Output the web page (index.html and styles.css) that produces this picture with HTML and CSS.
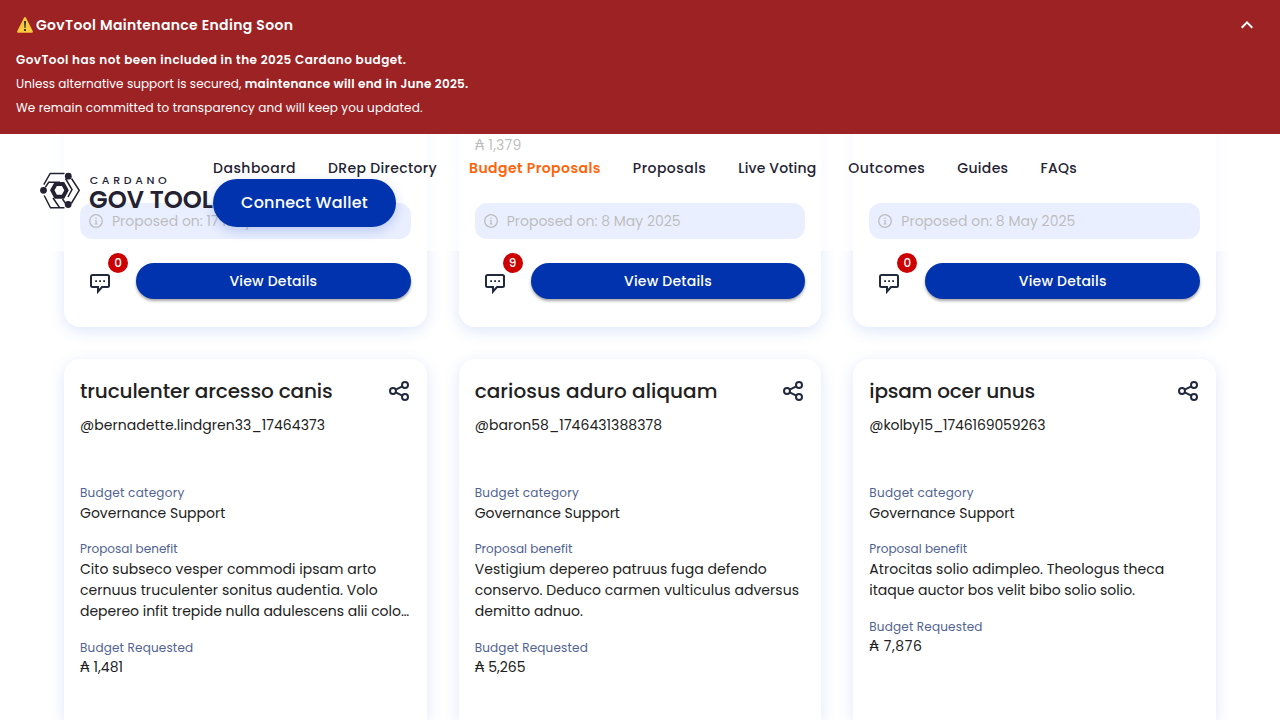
FILE: index.html
```html
<!DOCTYPE html>
<html lang="en">
<head>
<meta charset="utf-8">
<title>GovTool Budget Proposals</title>
<link rel="stylesheet" href="styles.css">
</head>
<body>
<svg class="defs" aria-hidden="true">
  <symbol id="share" viewBox="0 0 24 24"><g fill="none" stroke="#212a3d" stroke-width="2"><circle cx="6" cy="12" r="3"/><circle cx="18" cy="6" r="3"/><circle cx="18" cy="18" r="3"/><path d="M8.700 10.700 15.300 7.300M8.700 13.300 15.300 16.700"/></g></symbol>
  <symbol id="chat" viewBox="0 0 24 24"><path d="M4.500 4h15a1.500 1.500 0 0 1 1.500 1.500v9a1.500 1.500 0 0 1-1.500 1.500H14l-4 4.500V16H4.500A1.500 1.500 0 0 1 3 14.500v-9A1.500 1.500 0 0 1 4.500 4Z" fill="none" stroke="#212a3d" stroke-width="2"/><path d="M7.200 9.200h1.800v1.800H7.200zM11.200 9.200H13v1.800h-1.800zM15.200 9.200H17v1.800h-1.800z" fill="#212a3d"/></symbol>
  <symbol id="info" viewBox="0 0 16 16"><circle cx="8" cy="8" r="6.300" fill="none" stroke="#212121" stroke-width="1.300"/><path d="M7.300 4.800h1.400v1.300H7.300zM6.800 7.200h1.900v3.300h.7v.9H6.700v-.9h.8V8.100h-.7z" fill="#212121"/></symbol>
</svg>

<div class="banner">
  <div class="banner-head">
    <div class="banner-title"><svg class="warn" viewBox="0 0 18 18"><path d="M9 1c.5 0 .8.200 1 .7l6.700 13.200c.5 1.100 0 1.900-1.100 1.900H2.400c-1.100 0-1.600-.8-1.100-1.900L8 1.700c.2-.5.500-.7 1-.7Z" fill="#fcc93a"/><path d="M7.900 5h2.200l-.5 7H8.400zM8 13h2v2H8z" fill="#34404a"/></svg><span>GovTool Maintenance Ending Soon</span></div>
    <svg class="chevron" viewBox="0 0 24 24"><path d="m6.700 14.700 5.300-5.300 5.300 5.300" fill="none" stroke="#fff" stroke-width="2"/></svg>
  </div>
  <p><b class="b1">GovTool has not been included in the 2025 Cardano budget.</b></p>
  <p class="p2">Unless alternative support is secured, <b class="b2">maintenance will end in June 2025.</b></p>
  <p class="p3">We remain committed to transparency and will keep you updated.</p>
</div>

<header class="header">
  <svg class="logo" viewBox="0 0 173 42">
    <g fill="none" stroke="#242232" stroke-width="1.500"><path d="M24.500 4.500H10.200L3.800 15.700M31.500 9.500 39.200 21.300 31.300 34.500M24.500 38.800H10.500L4.200 26.500M5.300 18.300 8.700 13.300H20M25.500 9.500 32 20.500 28 28M13 29 19.500 38.500M22.500 30 26 35"/></g>
    <path d="M14.600 13H24.200L28.800 21.300 24.200 29.700H14.600L10 21.300Z" fill="#242232"/><path d="M16.900 17H21.900L24.300 21.300 21.900 25.700H16.900L14.500 21.300Z" fill="#fff"/>
    <g fill="#242232"><circle cx="28.300" cy="7.200" r="3.400"/><circle cx="3.500" cy="21.300" r="3.400"/><circle cx="28.200" cy="35.500" r="3.400"/></g>
    <text x="49.700" y="15.200" class="logo-small" textLength="77">CARDANO</text>
    <text x="49" y="38.500" class="logo-big" textLength="124" lengthAdjust="spacingAndGlyphs">GOV TOOL</text>
  </svg>
  <div class="header-main">
    <nav class="nav"><a class="n1">Dashboard</a><a class="n2">DRep Directory</a><a class="n3 active">Budget Proposals</a><a class="n4">Proposals</a><a class="n5">Live Voting</a><a class="n6">Outcomes</a><a class="n7">Guides</a><a class="n8">FAQs</a></nav>
    <button class="connect">Connect Wallet</button>
  </div>
</header>

<main class="grid">
  <article class="card tail">
    <div class="date"><svg><use href="#info"/></svg><span>Proposed on: 17 May 2025</span></div>
    <div class="actions"><div class="comments"><svg><use href="#chat"/></svg><span class="badge">0</span></div><button class="details">View Details</button></div>
  </article>
  <article class="card tail">
    <div class="amount">₳ 1,379</div>
    <div class="date"><svg><use href="#info"/></svg><span>Proposed on: 8 May 2025</span></div>
    <div class="actions"><div class="comments"><svg><use href="#chat"/></svg><span class="badge">9</span></div><button class="details">View Details</button></div>
  </article>
  <article class="card tail">
    <div class="date"><svg><use href="#info"/></svg><span>Proposed on: 8 May 2025</span></div>
    <div class="actions"><div class="comments"><svg><use href="#chat"/></svg><span class="badge">0</span></div><button class="details">View Details</button></div>
  </article>

  <article class="card first">
    <div class="title"><h2>truculenter arcesso canis</h2><svg><use href="#share"/></svg></div>
    <div class="handle">@bernadette.lindgren33_17464373</div>
    <div class="label category">Budget category</div><div class="value">Governance Support</div>
    <div class="label benefit">Proposal benefit</div><div class="value text">Cito subseco vesper commodi ipsam arto<br>cernuus truculenter sonitus audentia. Volo<br><span class="last">depereo infit trepide nulla adulescens alii colo…</span></div>
    <div class="label">Budget Requested</div><div class="value amt">₳ 1,481</div>
  </article>
  <article class="card second">
    <div class="title"><h2>cariosus aduro aliquam</h2><svg><use href="#share"/></svg></div>
    <div class="handle">@baron58_1746431388378</div>
    <div class="label category">Budget category</div><div class="value">Governance Support</div>
    <div class="label benefit">Proposal benefit</div><div class="value text">Vestigium depereo patruus fuga defendo<br>conservo. Deduco carmen vulticulus adversus<br>demitto adnuo.</div>
    <div class="label">Budget Requested</div><div class="value amt">₳ 5,265</div>
  </article>
  <article class="card third">
    <div class="title"><h2>ipsam ocer unus</h2><svg><use href="#share"/></svg></div>
    <div class="handle">@kolby15_1746169059263</div>
    <div class="label category">Budget category</div><div class="value">Governance Support</div>
    <div class="label benefit">Proposal benefit</div><div class="value text">Atrocitas solio adimpleo. Theologus theca<br><span class="last">itaque auctor bos velit bibo solio solio.</span></div>
    <div class="label">Budget Requested</div><div class="value amt wide">₳ 7,876</div>
  </article>
</main>
</body>
</html>
```
FILE: styles.css
```css
* { box-sizing: border-box; }
html { overflow: hidden; }
body { margin: 0; height: 720px; overflow: hidden; background: #fff; color: #212121; font-family: Poppins, Inter, "Noto Sans", sans-serif; font-size: 14px; white-space: nowrap; position: relative; }
.defs { position: absolute; width: 0; height: 0; }
h2, p { margin: 0; }
button { border: 0; font-family: inherit; color: #fff; background: #0033ad; padding: 0; font-weight: 500; }

.banner { position: absolute; z-index: 3; top: 0; left: 0; width: 1280px; height: 134px; background: #9c2224; color: #fff; padding: 13px 16px 0; font-size: 12px; }
.banner-head { display: flex; justify-content: space-between; height: 35px; }
.banner-title { display: flex; gap: 2px; height: 24px; align-items: center; font-size: 14px; font-weight: 600; letter-spacing: .34px; }
.warn { width: 18px; height: 18px; }
.chevron { width: 24px; height: 24px; margin-right: 5px; }
.banner p { line-height: 24px; letter-spacing: .12px; }
.banner .p2 { letter-spacing: .06px; }
.banner b { font-weight: 600; }
.b1 { letter-spacing: .45px; }
.b2 { letter-spacing: .28px; }

.header { position: absolute; z-index: 2; top: 134px; left: 0; width: 1280px; height: 117px; padding: 0 40px; background: rgba(255, 255, 255, .7); display: flex; }
.logo { width: 173px; height: 42px; margin-top: 35px; flex: none; }
.logo-small { font: 500 11px Poppins, Lato, sans-serif; fill: #242232; }
.logo-big { font: 600 23.8px Poppins, Lato, sans-serif; fill: #242232; }
.header-main { padding-top: 24px; }
.nav { display: flex; gap: 32px; height: 21px; line-height: 21px; color: #242232; font-weight: 500; }
.n1 { letter-spacing: .48px; }
.n2 { letter-spacing: .33px; }
.n3 { letter-spacing: .44px; }
.n4 { letter-spacing: .47px; }
.n5 { letter-spacing: .15px; }
.n6 { letter-spacing: .46px; }
.n7 { letter-spacing: .32px; }
.n8 { letter-spacing: .3px; }
.active { color: #ff640a; font-weight: 600; }
.connect { display: block; width: 183px; height: 48px; padding-bottom: 2px; border-radius: 24px; font-size: 16px; letter-spacing: .2px; box-shadow: 0 4px 12px rgba(0, 51, 173, .2); }

.grid { display: grid; grid-template-columns: repeat(3, minmax(0, 1fr)); grid-template-rows: 327px 361px; gap: 32px; height: 720px; padding: 0 64px; }
.card { background: #fff; border-radius: 16px; padding: 16px; box-shadow: 0 4px 15px rgba(47, 98, 220, .16); }
.first, .second, .third { border-radius: 16px 16px 0 0; }
.tail { display: flex; flex-direction: column; justify-content: flex-end; padding-bottom: 28px; }
.amount { line-height: 21px; margin-bottom: 47px; letter-spacing: .2px; }
.date { height: 36px; border-radius: 12px; background: #b6c9ff; display: flex; align-items: center; padding-left: 8px; gap: 8px; margin-bottom: 24px; }
.date svg { width: 16px; height: 16px; }
.actions { display: flex; gap: 16px; }
.comments { width: 40px; height: 36px; padding: 8px; position: relative; }
.comments svg { width: 24px; height: 24px; display: block; }
.badge { position: absolute; left: 28px; top: -10px; width: 20px; height: 20px; border-radius: 50%; background: #cc0000; color: #fff; font-size: 12px; font-weight: 500; line-height: 20px; text-align: center; }
.details { flex: 1; height: 36px; border-radius: 18px; font-size: 14px; letter-spacing: .21px; box-shadow: 0 2px 3px rgba(0, 0, 0, .35); }
.title { display: flex; justify-content: space-between; align-items: center; height: 32px; }
.title svg { width: 24px; height: 24px; }
h2 { font-size: 20px; font-weight: 500; line-height: 32px; letter-spacing: -.13px; }
.second h2 { letter-spacing: .06px; }
.third h2 { letter-spacing: -.2px; }
.handle { line-height: 21px; margin: 8px 0 48px; letter-spacing: .06px; }
.third .handle { letter-spacing: -.1px; }
.label { font-size: 12px; line-height: 18px; color: #506290; letter-spacing: .18px; }
.category { letter-spacing: .26px; }
.benefit { letter-spacing: .02px; }
.value { line-height: 21px; padding-top: 1px; margin-bottom: 16px; }
.text { margin-bottom: 17px; letter-spacing: .05px; }
.last { letter-spacing: -.02px; }
.amt { padding-top: 0; letter-spacing: .04px; }
.wide { letter-spacing: .55px; }
```
